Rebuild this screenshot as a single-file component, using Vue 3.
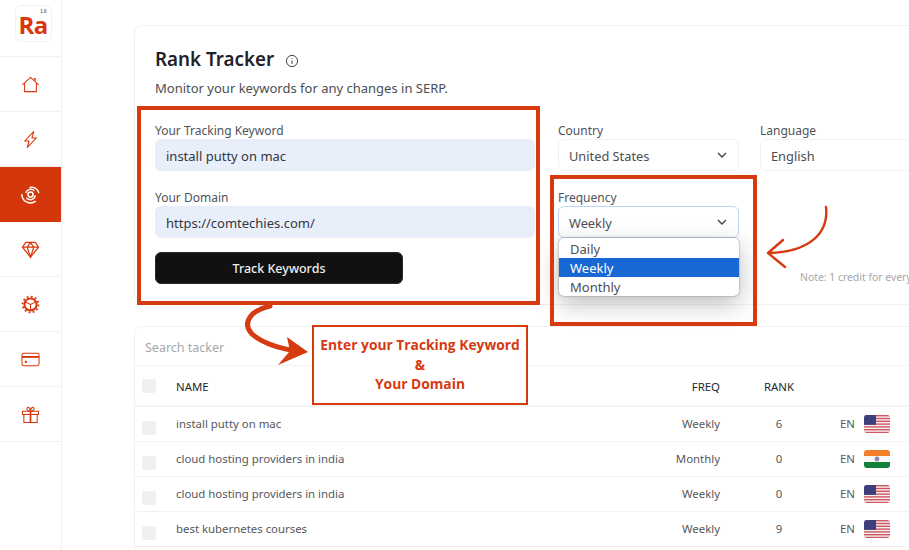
<script setup>
const rows = [
  { name: 'install putty on mac', freq: 'Weekly', rank: 6, flag: 'us' },
  { name: 'cloud hosting providers in india', freq: 'Monthly', rank: 0, flag: 'in' },
  { name: 'cloud hosting providers in india', freq: 'Weekly', rank: 0, flag: 'us' },
  { name: 'best kubernetes courses', freq: 'Weekly', rank: 9, flag: 'us' },
]
const stripes = [0, 2, 4, 6, 8, 10, 12]
</script>

<template>
  <div class="page">
    <aside class="side">
      <div class="logo-row">
        <div class="logo"><span class="ra">Ra</span><span class="ver">1.0</span></div>
      </div>
      <div class="nav">
        <svg viewBox="0 0 20 20" class="ico"><path d="M1.5 10.5 L10 2.5 L18.5 10.5 M3.8 9 V17.5 H16.2 V9" /><path d="M13 3.2 L15.5 3.2 V7 Z" fill="#d9360b" stroke="none" /></svg>
      </div>
      <div class="nav">
        <svg viewBox="0 0 20 20" class="ico"><path d="M13.5 1.5 L4 11.5 H8.5 L6.5 18.5 L16 8.5 H11.5 Z" /></svg>
      </div>
      <div class="nav active">
        <svg viewBox="0 0 20 20" class="ico"><circle cx="10" cy="10" r="2.7" stroke-width="1.7" /><path d="M5 8.5 A5.4 5.4 0 0 1 14 6" stroke-width="1.5" /><path d="M5.5 13.5 A5.6 5.6 0 0 0 15.2 11" stroke-width="1.5" /><path d="M1 9.5 A9 8.8 0 0 0 15.5 17" stroke-width="1.5" /><path d="M9 2.6 A8 7.5 0 0 1 18.8 8.5" stroke-width="1.5" /></svg>
      </div>
      <div class="nav">
        <svg viewBox="0 0 20 20" class="ico gem"><path d="M5 2.5 H15 L18.5 7.5 L10 18 L1.5 7.5 Z" /><path d="M1.5 7.5 H18.5 M6.5 7.5 L10 18 L13.5 7.5 M6.5 7.5 L10 3 L13.5 7.5" /></svg>
      </div>
      <div class="nav">
        <svg viewBox="0 0 20 20" class="ico"><circle cx="10" cy="10" r="6.4" stroke-width="2.1" /><circle cx="10" cy="10" r="8.4" stroke-width="1.8" stroke-dasharray="2 2.4" /><path d="M10 10 L15 7.5 M10 10 L5 7.5 M10 10 V16" /></svg>
      </div>
      <div class="nav">
        <svg viewBox="0 0 20 20" class="ico"><rect x="1" y="3.5" width="18" height="13" rx="2" /><path d="M1 7.3 H19" stroke-width="2" /><rect x="4" y="11.4" width="2.2" height="2.2" fill="#d9360b" stroke="none" /></svg>
      </div>
      <div class="nav">
        <svg viewBox="0 0 20 20" class="ico"><path d="M1.5 6.5 H18.5 V10 H1.5 Z M3 10 V18.5 H17 V10" /><path d="M10 6.5 V18.5" stroke-width="1.8" /><path d="M10 6.5 C7 6.5 5.5 5 6.5 3 C7.5 1.5 10 3 10 6.5 C10 3 12.5 1.5 13.5 3 C14.5 5 13 6.5 10 6.5" /></svg>
      </div>
    </aside>

    <main class="main">
      <section class="card top">
        <h1 class="title">Rank Tracker
          <svg viewBox="0 0 14 14" class="info"><circle cx="7" cy="7" r="5.6" /><path d="M7 6.3 V10 M7 4 V4.9" /></svg>
        </h1>
        <p class="sub">Monitor your keywords for any changes in SERP.</p>

        <div class="form">
          <div class="left">
            <label class="lbl">Your Tracking Keyword</label>
            <div class="input">install putty on mac</div>
            <label class="lbl second">Your Domain</label>
            <div class="input">https://comtechies.com/</div>
            <button class="btn">Track Keywords</button>
          </div>
          <div class="right">
            <div class="field">
              <label class="lbl">Country</label>
              <div class="select">United States <svg viewBox="0 0 12 12" class="chev"><path d="M2 4 L6 8 L10 4" /></svg></div>
            </div>
            <div class="field">
              <label class="lbl">Language</label>
              <div class="select">English</div>
            </div>
            <div class="field freq">
              <label class="lbl">Frequency</label>
              <div class="select focus">Weekly <svg viewBox="0 0 12 12" class="chev"><path d="M2 4 L6 8 L10 4" /></svg></div>
              <ul class="menu">
                <li>Daily</li>
                <li class="sel">Weekly</li>
                <li>Monthly</li>
              </ul>
            </div>
            <div class="note">Note: 1 credit for every keyword</div>
          </div>
        </div>
      </section>

      <section class="card table">
        <div class="search">Search tacker</div>
        <div class="row head">
          <span class="check"></span>
          <span class="name">NAME</span>
          <span class="fr">FREQ</span>
          <span class="rk">RANK</span>
        </div>
        <div v-for="(r, i) in rows" :key="i" class="row">
          <span class="check low"></span>
          <span class="name">{{ r.name }}</span>
          <span class="fr">{{ r.freq }}</span>
          <span class="rk">{{ r.rank }}</span>
          <span class="lang">EN</span>
          <svg v-if="r.flag === 'us'" viewBox="0 0 26 18" class="flag">
            <rect width="26" height="18" fill="#f4f1f1" />
            <rect v-for="s in stripes" :key="s" x="0" :y="s * 1.4" width="26" height="1.4" fill="#cf5560" />
            <rect width="12" height="9.8" fill="#3d3f7c" />
          </svg>
          <svg v-else viewBox="0 0 26 18" class="flag">
            <rect y="0" width="26" height="6" fill="#f47f2b" />
            <rect y="6" width="26" height="6" fill="#f7f7f7" />
            <rect y="12" width="26" height="6" fill="#13803a" />
            <circle cx="13" cy="9" r="2.4" fill="#8a8ab0" />
          </svg>
        </div>
      </section>
    </main>

    <!-- annotations drawn over the screenshot -->
    <div class="mark mark-a"></div>
    <div class="mark mark-b"></div>
    <div class="callout">
      Enter your Tracking Keyword<br />&amp;<br />Your Domain
    </div>
    <svg class="arrow arrow-a" viewBox="0 0 70 64">
      <path d="M26 2 C8 6 -3 18 8 30 C18 39 34 44 52 47" fill="none" stroke="#d63a10" stroke-width="5" stroke-linecap="round" />
      <path d="M43 33 L64 48 L34 61 L46 47 Z" fill="#d63a10" />
    </svg>
    <svg class="arrow arrow-b" viewBox="0 0 70 70">
      <path d="M61 2 C64 30 42 47 4 48 M18 35 L3 48 L20 62" fill="none" stroke="#d63a10" stroke-width="2.4" stroke-linecap="round" stroke-linejoin="round" />
    </svg>
  </div>
</template>

<style>
html, body { margin: 0; background: #fff; }
</style>

<style scoped>
.page {
  position: relative;
  width: 909px;
  height: 550px;
  overflow: hidden;
  display: flex;
  background: #fff;
  font-family: "Noto Sans", "Open Sans", sans-serif;
  color: #3c4043;
}
.side {
  flex: 0 0 62px;
  box-sizing: border-box;
  border-right: 1px solid #f1f1f2;
  display: flex;
  flex-direction: column;
}
.logo-row {
  height: 57px;
  display: flex;
  align-items: flex-start;
  justify-content: center;
  padding-top: 5px;
  box-sizing: border-box;
  border-bottom: 1px solid #f1f1f2;
}
.logo {
  position: relative;
  width: 37px;
  height: 37px;
  box-sizing: border-box;
  border: 1px solid #f2f2f2;
  border-radius: 6px;
  margin-left: 5px;
  padding: 9px 0 0 3px;
}
.ra { display: block; font: 700 24px/20px "Open Sans", sans-serif; color: #d9360b; letter-spacing: -0.5px; }
.ver { position: absolute; top: 3px; right: 4px; font: 700 4.5px/5px "Liberation Sans", sans-serif; color: #666; }
.nav {
  height: 55px;
  display: flex;
  align-items: center;
  justify-content: center;
  border-bottom: 1px solid #f1f1f2;
  box-sizing: border-box;
}
.nav.active { background: #d4370b; border-bottom: none; }
.nav.active .ico { stroke: #fff; }
.ico { width: 19px; height: 19px; fill: none; stroke: #d9360b; stroke-width: 1.1; }
.gem { stroke-width: 1.3; }

.main { flex: 1; padding: 25px 0 0 72px; min-width: 0; }
.card { width: 830px; border: 1px solid #f1f1f2; border-radius: 8px; box-sizing: border-box; }
.top { padding: 19px 20px 0; height: 280px; }
.title {
  margin: 0;
  font: 600 18.8px/28px "Noto Sans", sans-serif;
  color: #1f2328;
  display: flex;
  align-items: center;
  gap: 11px;
}
.info { width: 14px; height: 14px; fill: none; stroke: #444; stroke-width: 1; margin-top: 3px; }
.sub { margin: 5px 0 0; font-size: 13px; line-height: 20px; color: #4a4e52; }
.form { display: flex; gap: 23px; margin-top: 24px; }
.left { width: 380px; flex: none; }
.lbl { display: block; font-size: 12px; line-height: 17px; color: #4f5357; }
.second { margin-top: 18px; }
.input {
  height: 32px;
  line-height: 34px;
  padding-left: 11px;
  background: #e8effb;
  border-radius: 6px;
  font-size: 13px;
  color: #33373b;
}
.btn {
  display: block;
  width: 248px;
  height: 32px;
  margin-top: 14px;
  border: 1px solid #2a2a2a;
  border-radius: 6px;
  background: #111;
  color: #eee;
  font: 500 12.5px "Noto Sans", sans-serif;
}
.right { display: grid; grid-template-columns: 181px 180px; column-gap: 21px; row-gap: 18px; align-content: start; }
.field { position: relative; }
.select {
  height: 32px;
  line-height: 32px;
  box-sizing: border-box;
  padding-left: 10px;
  border: 1px solid #f0f1f3;
  border-radius: 6px;
  font-size: 12.8px;
  color: #4a4e52;
  position: relative;
}
.focus { border-color: #bcd4f7; }
.chev { position: absolute; right: 10px; top: 9px; width: 12px; height: 12px; fill: none; stroke: #444; stroke-width: 1.4; }
.menu {
  position: absolute;
  left: 1px;
  right: 0;
  top: 49px;
  margin: 0;
  padding: 1px 0 0;
  list-style: none;
  background: #fff;
  border-radius: 5px;
  font-size: 13px;
  color: #4a4e52;
  box-shadow: 0 0 2px #777, 0 8px 24px rgba(0,0,0,.26);
}
.menu li { padding-left: 11px; height: 19px; line-height: 21px; }
.menu .sel { background: #1967d2; color: #fff; }
.note { font-size: 10.4px; line-height: 14px; color: #a4a6a9; white-space: nowrap; align-self: start; margin: 81px 0 0 40px; }

.table { margin-top: 21px; height: 300px; }
.search { height: 39px; line-height: 42px; padding-left: 10px; font-size: 12.5px; color: #a5a8ab; border-bottom: 1px solid #f3f3f4; box-sizing: border-box; }
.row {
  height: 35px;
  display: flex;
  align-items: center;
  font-size: 11.4px;
  color: #54585c;
  border-bottom: 1px solid #f3f3f4;
  box-sizing: border-box;
  position: relative;
}
.head { height: 41px; color: #24282c; border-bottom-width: 2px; }
.head .name, .head .fr, .head .rk { margin-top: 1px; }
.check { flex: none; width: 14px; height: 14px; margin-left: 7px; border-radius: 3px; background: #efefef; }
.check.low { margin-top: 8px; }
.name { flex: none; width: 484px; margin-left: 20px; margin-top: -1px; }
.fr { flex: none; width: 60px; text-align: right; margin-top: -1px; }
.rk { flex: none; width: 60px; margin-left: 29px; text-align: center; margin-top: -1px; }
.lang { flex: none; width: 28px; text-align: right; margin-left: 18px; margin-top: -1px; }
.flag { flex: none; width: 26px; height: 18px; margin-left: 9px; border-radius: 3px; overflow: hidden; }

.mark { position: absolute; box-sizing: border-box; border: 4px solid #d63a10; }
.mark-a { left: 137px; top: 106px; width: 403px; height: 199px; }
.mark-b { left: 550px; top: 175px; width: 207px; height: 151px; }
.callout {
  position: absolute;
  left: 312px;
  top: 325px;
  width: 216px;
  height: 80px;
  box-sizing: border-box;
  border: 2px solid #d63a10;
  background: #fff;
  padding-top: 8px;
  text-align: center;
  font: 700 13.8px/19.5px "Open Sans", sans-serif;
  color: #d63a10;
}
.arrow { position: absolute; }
.arrow-a { left: 244px; top: 304px; width: 70px; height: 64px; }
.arrow-b { left: 765px; top: 205px; width: 70px; height: 70px; }
</style>
